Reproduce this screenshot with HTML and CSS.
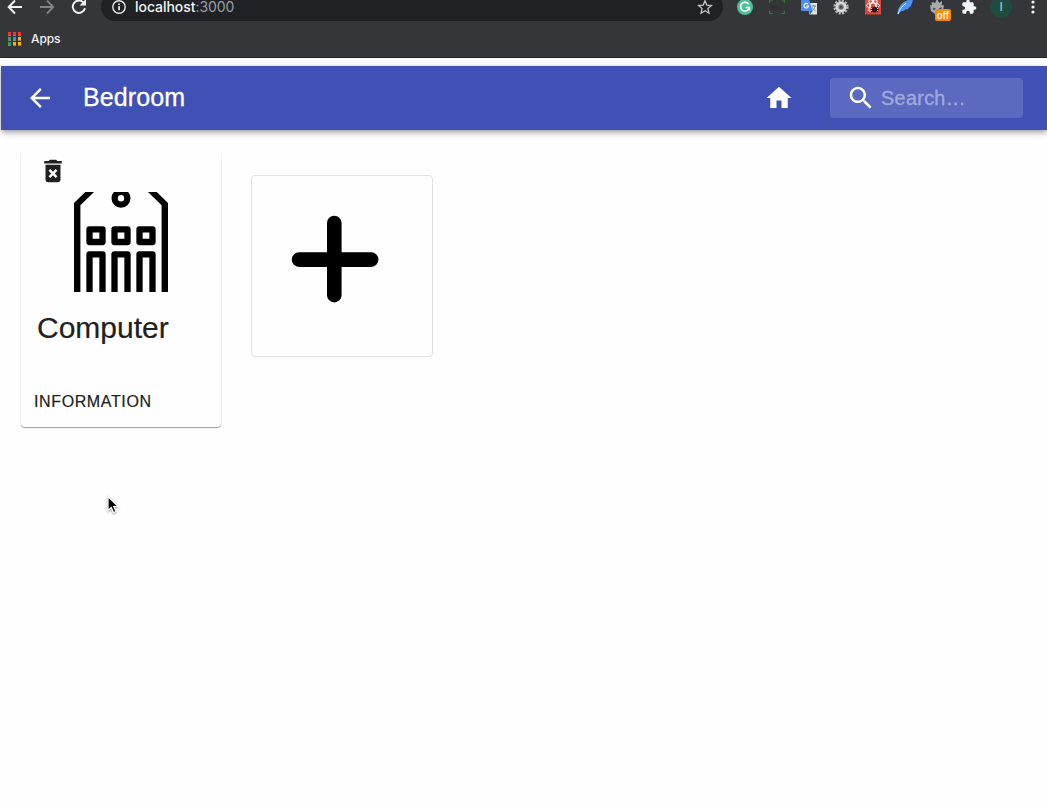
FILE: index.html
```html
<!DOCTYPE html>
<html lang="en">
<head>
<meta charset="utf-8">
<title>Bedroom</title>
<link rel="stylesheet" href="styles.css">
</head>
<body>
<header class="browser">
  <div class="toolbar">
    <span class="cell"><svg width="16" height="16" viewBox="0 0 16 16" fill="none" stroke="#f1f3f4" stroke-width="2"><path d="M15 8H2M8 1.5L1.7 8L8 14.5"/></svg></span>
    <span class="cell"><svg width="16" height="16" viewBox="0 0 16 16" fill="none" stroke="#828386" stroke-width="1.8"><path d="M1 8h13M8 1.5L14.3 8L8 14.5"/></svg></span>
    <span class="cell"><svg width="16" height="16" viewBox="0 0 16 16" fill="none" stroke="#f1f3f4" stroke-width="2"><path d="M13.3 4.5A6.2 6.2 0 1 0 14 9.3"/><path d="M15 0v6.6H8.6z" fill="#f1f3f4" stroke="none"/></svg></span>
    <div class="omnibox">
      <svg width="14" height="14" viewBox="0 0 14 14"><circle cx="7" cy="7" r="6.2" fill="none" stroke="#e8eaed" stroke-width="1.4"/><path d="M6.2 6.1h1.7v4.2H6.2zM6.2 3.4h1.7v1.7H6.2z" fill="#e8eaed"/></svg>
      <span class="url">localhost<span class="port">:3000</span></span>
      <svg class="star" width="16" height="16" viewBox="0 0 16 16" fill="none" stroke="#c4c6c9" stroke-width="1.3"><path d="M8 1.8l1.8 4.3 4.7.4-3.6 3.1 1.1 4.6L8 11.8l-4 2.4 1.1-4.6L1.500 6.5l4.700-.4z"/></svg>
    </div>
    <div class="extensions">
      <span class="cell"><svg width="16" height="16" viewBox="0 0 16 16"><circle cx="8" cy="8" r="8" fill="#4fc19a"/><path d="M11.600 5.100A4.400 4.400 0 1 0 12.300 8.600H8.800M12.300 8.600v2.800" fill="none" stroke="#fff" stroke-width="1.500"/></svg></span>
      <span class="cell"><svg width="16" height="16" viewBox="0 0 16 16" fill="none"><path d="M3 6h10v5H3z" fill="#303135"/><path d="M.7 4V1h3M12.300 1h3v3M15.300 11.500v3h-3M3.700 14.500h-3v-3" stroke="#347a2e" stroke-width="1.200"/></svg></span>
      <span class="cell"><svg width="16" height="16" viewBox="0 0 16 16"><path d="M6 4h10v11.500H8.500z" fill="#dfe1e3"/><path d="M0 0h8l3.500 12H1a1 1 0 0 1-1-1z" fill="#4f8df0"/><path d="M8.300 12h3.200l-2.500 3.500z" fill="#2c5fc9"/><path d="M7 5.200A2.300 2.300 0 1 0 7.500 7H5.300" fill="none" stroke="#fff" stroke-width="1.100"/><path d="M10.500 7h4.500M12.700 6v1M14 7.200c-.4 2-1.500 3.400-2.800 4.300M11.500 8.500c.5 1.500 1.600 2.700 3 3.400" stroke="#788b94" fill="none"/></svg></span>
      <span class="cell"><svg width="16" height="16" viewBox="0 0 16 16"><circle cx="8" cy="8" r="6.300" fill="none" stroke="#b9b9b9" stroke-width="2.600" stroke-dasharray="2 1.299"/><circle cx="8" cy="8" r="4.100" fill="#77787b" stroke="#d7d7d7" stroke-width="2.800"/><circle cx="8" cy="8" r="1.500" fill="#48494c"/></svg></span>
      <span class="cell"><svg width="16" height="16" viewBox="0 0 16 16"><path d="M0 0h16v15.500H0z" fill="#d9483b"/><g fill="none" stroke="#fff"><ellipse cx="8" cy="6.500" rx="6.500" ry="2.500"/><ellipse cx="8" cy="6.500" rx="6.500" ry="2.500" transform="rotate(60 8 6.500)"/><ellipse cx="8" cy="6.500" rx="6.500" ry="2.500" transform="rotate(120 8 6.500)"/></g><ellipse cx="9.500" cy="10.500" rx="2.500" ry="3" fill="#261b1a"/><path d="M6 8l7 5M13 8l-7 5M6 10.500h7.500" stroke="#261b1a"/></svg></span>
      <span class="cell"><svg width="16" height="16" viewBox="0 0 16 16"><path d="M16 0C7 1 1 6 .5 15l1.500.2C3 12.500 4 12 7 11.700l1.500-1.500 2 .2 2-2.300 1.200-.5L15.500 3z" fill="#4796f8"/><path d="M1 15C2.500 10 5.500 6.500 9 4.500" stroke="#dcecff" fill="none"/></svg></span>
      <span class="cell badge-host"><svg width="16" height="16" viewBox="0 0 16 16"><path d="M8 0l2.200 4L13 2l-.3 4.500L15 6l-1 6-4 3H6l-4-3L1 6l2 .5L2.500 3 6 4z" fill="#a9aaab"/><path d="M4 8.500l3 1.500-2.500 1zM12.500 8l-3 2 2.500 1z" fill="#333"/></svg><span class="badge">off</span></span>
      <span class="cell"><svg width="16" height="16" viewBox="0 0 24 24"><path fill="#f1f3f4" d="M20.500 11H19V7c0-1.100-.9-2-2-2h-4V3.500a2.500 2.500 0 0 0-5 0V5H4c-1.100 0-2 .9-2 2v3.800h1.500a2.700 2.700 0 0 1 0 5.400H2V20c0 1.100.9 2 2 2h3.800v-1.500a2.700 2.700 0 0 1 5.400 0V22H17c1.100 0 2-.9 2-2v-4h1.500a2.500 2.500 0 0 0 0-5z"/></svg></span>
      <span class="cell"><span class="avatar">I</span></span>
      <span class="cell"><svg width="4" height="16" viewBox="0 0 4 16" fill="#f1f3f4"><circle cx="2" cy="3" r="1.600"/><circle cx="2" cy="8" r="1.600"/><circle cx="2" cy="13" r="1.600"/></svg></span>
    </div>
  </div>
  <div class="bookmarks">
    <svg width="13" height="14" viewBox="0 0 13 14"><path d="M0 3h3v1H0zM5 3h3v1H5zM10 3h3v1h-3zM0 8h3v1H0zM5 8h3v1H5zM10 8h3v1h-3zM0 13h3v1H0zM5 13h3v1H5zM10 13h3v1h-3z" fill="#85868a"/><path d="M0 0h3v3H0zM5 0h3v3H5zM10 0h3v3h-3z" fill="#ea3a30"/><path d="M0 5h3v3H0zM0 10h3v3H0z" fill="#36a052"/><path d="M5 5h3v3H5z" fill="#4285f4"/><path d="M10 5h3v3h-3zM5 10h3v3H5zM10 10h3v3h-3z" fill="#fbb005"/></svg>
    <span class="bookmark-label">Apps</span>
  </div>
</header>
<nav class="appbar">
  <svg class="icon" viewBox="0 0 24 24"><path d="M20 11H7.830l5.590-5.590L12 4l-8 8 8 8 1.410-1.410L7.830 13H20v-2z"/></svg>
  <h1 class="title">Bedroom</h1>
  <svg class="icon home" viewBox="0 0 24 24"><path d="M10 20v-6h4v6h5v-8h3L12 3 2 12h3v8z"/></svg>
  <div class="search">
    <svg class="icon" viewBox="0 0 24 24"><path d="M15.500 14h-.79l-.28-.27C15.410 12.590 16 11.110 16 9.500 16 5.910 13.090 3 9.500 3S3 5.910 3 9.500 5.910 16 9.500 16c1.610 0 3.090-.59 4.230-1.570l.27.28v.79l5 4.990L20.490 19l-4.990-5zm-6 0C7.010 14 5 11.990 5 9.500S7.010 5 9.500 5 14 7.010 14 9.500 11.990 14 9.500 14z"/></svg>
    <span class="placeholder">Search…</span>
  </div>
</nav>
<main class="devices">
  <article class="card">
    <svg class="delete" viewBox="0 0 24 24"><path d="M6 19c0 1.100.9 2 2 2h8c1.100 0 2-.9 2-2V7H6v12zm2.460-7.120l1.410-1.410L12 12.590l2.120-2.120 1.410 1.410L13.410 14l2.120 2.120-1.410 1.410L12 15.410l-2.120 2.120-1.410-1.410L10.590 14l-2.130-2.120zM15.500 4l-1-1h-5l-1 1H5v2h14V4z"/></svg>
    <svg class="picture" width="200" height="100" viewBox="0 0 200 100">
      <path d="M53 100V11L64.300 0H73L59.400 13.300V100zM147 100V11L135.700 0H127l13.600 13.300V100z"/>
      <g fill="none" stroke="#000" stroke-width="6.300" stroke-linejoin="round">
        <circle cx="100" cy="6.200" r="6.350"/>
        <rect x="68.500" y="37.300" width="13" height="12.700"/>
        <rect x="93.500" y="37.300" width="13" height="12.700"/>
        <rect x="118.500" y="37.300" width="13" height="12.700"/>
        <path d="M68.500 104V62.300h13V104M93.500 104V62.300h13V104M118.500 104V62.300h13V104"/>
      </g>
    </svg>
    <h2 class="name">Computer</h2>
    <span class="action">Information</span>
  </article>
  <div class="add">
    <svg width="88" height="88" viewBox="0 0 88 88"><path d="M43.300 8v72.200M8 44.600h72.200" stroke="#000" stroke-width="14.600" stroke-linecap="round"/></svg>
  </div>
</main>
<svg class="cursor" width="14" height="20" viewBox="0 0 14 20"><path d="M2 1.500v14l3.300-3 2.200 5 2.500-1-2.200-5h4.400z" fill="#000" stroke="#fff" stroke-width="1.200"/></svg>
</body>
</html>
```
FILE: styles.css
```css
* { box-sizing: border-box; }
body {
  margin: 0;
  height: 806px;
  overflow: hidden;
  background: #fefefe;
  font-family: "Liberation Sans", Arial, sans-serif;
  color: #212121;
}
svg { display: block; flex: none; }
h1, h2 { margin: 0; font-weight: 400; }

.browser {
  height: 58px;
  overflow: hidden;
  background: #35363a;
  border-bottom: 1px solid #242528;
  color: #f1f3f4;
  font-family: Inter, Roboto, sans-serif;
}
.toolbar {
  display: flex;
  align-items: center;
  height: 28px;
  width: 1050px;
  margin: -7px 0 0 -1px;
}
.cell {
  display: flex;
  align-items: center;
  justify-content: center;
  flex: none;
  width: 32px;
  height: 28px;
}
.omnibox {
  display: flex;
  align-items: center;
  width: 622px;
  height: 28px;
  margin: 0 6px;
  padding: 0 10px 0 11px;
  border-radius: 14px;
  background: #202124;
}
.url { margin-left: 9px; padding-bottom: 2px; font-size: 14px; font-weight: 500; letter-spacing: -0.05px; }
.port { color: #9aa0a6; font-weight: 400; }
.star { margin-left: auto; }
.extensions { display: flex; }
.badge-host { position: relative; }
.badge {
  position: absolute;
  left: 14px;
  top: 16px;
  width: 16px;
  height: 12px;
  border-radius: 2px;
  background: #f28b0c;
  color: #fff;
  font-size: 9.500px;
  font-weight: 500;
  line-height: 13px;
  text-align: center;
}
.avatar {
  width: 22px;
  height: 22px;
  border-radius: 50%;
  background: #1e4d40;
  color: #c5d5d0;
  font-size: 12px;
  line-height: 21px;
  text-align: center;
}
.bookmarks {
  display: flex;
  align-items: center;
  gap: 10px;
  height: 36px;
  padding-left: 8px;
  font-size: 12px;
  font-weight: 500;
}
.bookmark-label { padding-bottom: 2px; letter-spacing: -0.1px; }

.appbar {
  display: flex;
  align-items: center;
  height: 64px;
  margin: 8px 0 0 1px;
  padding: 0 24px;
  background: #3f51b5;
  color: #fff;
  box-shadow: 0 2px 4px -1px rgba(0,0,0,.2), 0 4px 5px rgba(0,0,0,.14), 0 1px 10px rgba(0,0,0,.12);
}
.icon { width: 30px; height: 30px; fill: currentColor; }
.title { margin-left: 28px; padding-bottom: 2px; font-size: 25px; line-height: 40px; letter-spacing: .1px; -webkit-text-stroke: .3px; }
.home { margin: 0 36px 0 auto; }
.search {
  display: flex;
  align-items: center;
  width: 193px;
  height: 40px;
  padding-left: 16px;
  border-radius: 4px;
  background: rgba(255,255,255,.15);
}
.placeholder { margin-left: 5px; font-size: 20px; letter-spacing: .22px; opacity: .42; -webkit-text-stroke: .3px; }

.devices { display: flex; align-items: flex-start; padding: 23px 21px; }
.card {
  display: flex;
  flex-direction: column;
  width: 200px;
  height: 274px;
  border-radius: 0 0 4px 4px;
  background: #fefefe;
  box-shadow: 0 1px 1px rgba(0,0,0,.38), 0 0 1px rgba(0,0,0,.16);
  clip-path: inset(0 -3px -4px -3px);
}
.delete { width: 30px; height: 30px; margin: 3px 0 0 17px; fill: #212121; }
.picture { margin-top: 6px; }
.name { margin: 17px 0 0 16px; font-size: 30px; line-height: 38px; -webkit-text-stroke: .2px; }
.action {
  margin: 45px 0 0 13px;
  font-size: 16px;
  line-height: 20px;
  letter-spacing: .62px;
  text-transform: uppercase;
  -webkit-text-stroke: .2px;
}
.add {
  width: 182px;
  height: 182px;
  margin: 22px 0 0 30px;
  padding: 39px;
  border: 1px solid #e2e2e2;
  border-radius: 4px;
}
.cursor { position: absolute; left: 106px; top: 495px; filter: drop-shadow(0 1px 1px rgba(0,0,0,.4)); }
```
